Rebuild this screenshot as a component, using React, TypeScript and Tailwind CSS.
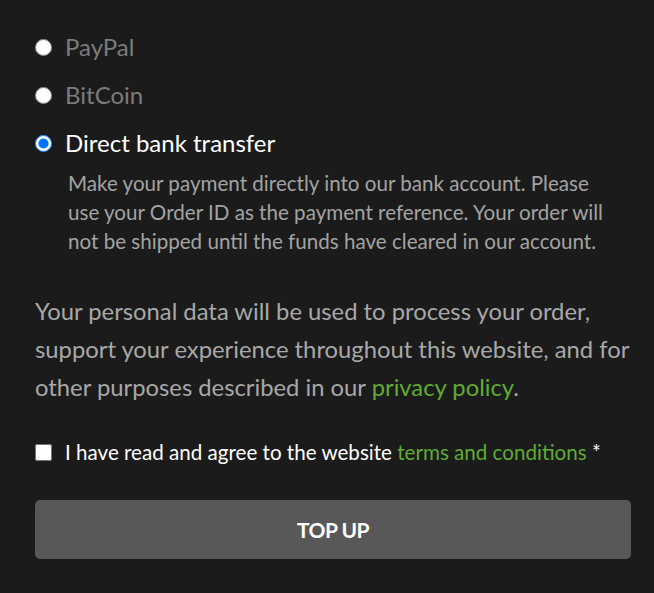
import React from "react";

export default function App() {
  return (
    <div className="min-h-[593px] w-full bg-[#1b1b1b] text-white" style={{ fontFamily: "Lato, 'Open Sans', sans-serif" }}>
      <div className="pl-[35px] pr-[23px] pt-[30px]">
        <div className="flex flex-col">
          <label className="flex items-center h-[34px] gap-[13px]">
            <input type="radio" name="pay" className="m-0 w-[17px] h-[17px]" />
            <span className="text-[24px] text-[#7b7b7b]">PayPal</span>
          </label>
          <label className="flex items-center h-[34px] gap-[13px] mt-[14px]">
            <input type="radio" name="pay" className="m-0 w-[17px] h-[17px]" />
            <span className="text-[24px] text-[#7b7b7b]">BitCoin</span>
          </label>
          <label className="flex items-center h-[34px] gap-[13px] mt-[14px]">
            <input type="radio" name="pay" defaultChecked className="m-0 w-[17px] h-[17px]" />
            <span className="text-[24px] text-white">Direct bank transfer</span>
          </label>
          <p className="ml-[33px] mr-[6px] mt-[9px] text-[20.6px] leading-[29px] text-[#a3a3a3]">
            Make your payment directly into our bank account. Please use your Order ID as the payment reference. Your order will not be shipped until the funds have cleared in our account.
          </p>
        </div>
        <p className="mt-[36px] text-[23.8px] leading-[38px] text-[#a8a8a8]">
          Your personal data will be used to process your order, support your experience throughout this website, and for other purposes described in our{" "}
          <a className="text-[#5fac33]">privacy policy</a>.
        </p>
        <label className="flex items-center gap-[13px] mt-[31px]">
          <input type="checkbox" className="m-0 w-[17px] h-[17px]" />
          <span className="text-[20.6px] text-white">
            I have read and agree to the website <a className="text-[#5fac33]">terms and conditions</a> *
          </span>
        </label>
        <button className="mt-[32px] w-full h-[59px] rounded-[5px] bg-[#585858] text-white text-[21px] font-bold tracking-[-0.5px]">
          TOP UP
        </button>
      </div>
    </div>
  );
}
